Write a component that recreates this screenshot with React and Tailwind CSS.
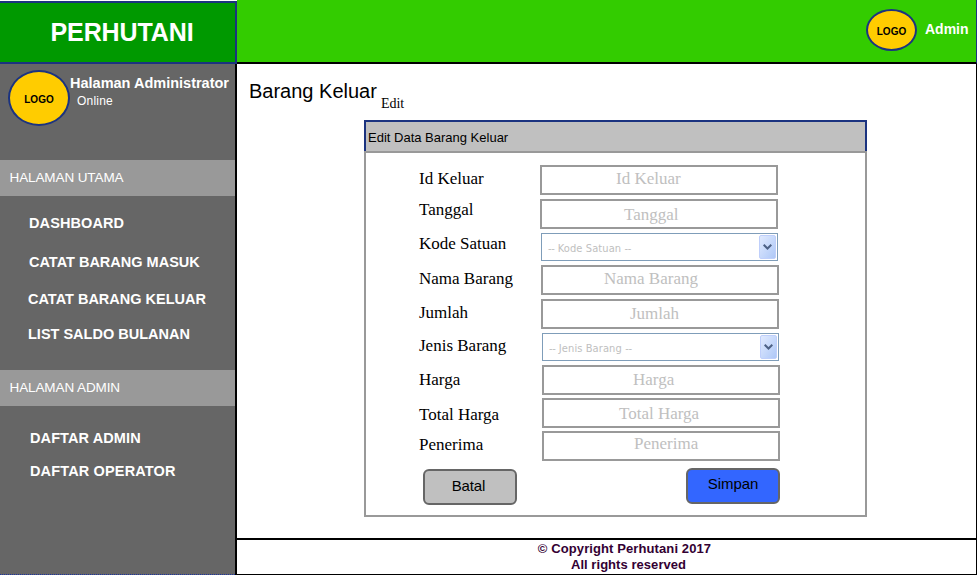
const sans = "font-['Liberation_Sans',Arial,sans-serif]";

function Logo({ className }) {
  return (
    <div
      className={`flex shrink-0 items-center justify-center rounded-[50%] border-2 border-[#1b3380] bg-[#ffcc00] text-[10px] leading-3 font-bold text-black ${className}`}
    >
      LOGO
    </div>
  );
}

function NavHeading({ children }) {
  return (
    <div className="h-9 bg-[#999999] pt-2 pl-[9.5px] text-[13.5px] leading-5 tracking-[-0.1px] text-white">{children}</div>
  );
}

function NavItem({ className, children }) {
  return <a className={`block h-5 whitespace-nowrap text-[14.5px] leading-5 font-bold text-white ${className}`}>{children}</a>;
}

function Row({ label, labelClass, rowClass, children }) {
  return (
    <div className={`flex items-start ${rowClass}`}>
      <label className={`w-[121px] shrink-0 whitespace-nowrap text-[17px] leading-5 ${labelClass}`}>{label}</label>
      {children}
    </div>
  );
}

function Field({ className, children }) {
  return (
    <div className={`h-[30px] w-[238px] shrink-0 whitespace-nowrap border-2 border-[#999999] text-[17px] leading-5 text-[#c0c0c0] ${className}`}>
      {children}
    </div>
  );
}

function Select({ className, children }) {
  return (
    <div className={`flex h-7 w-[237px] shrink-0 justify-between border border-[#7f9db9] pt-px pr-px pl-[6px] ${className}`}>
      <span className="pt-1 font-['DejaVu_Sans_Condensed','DejaVu_Sans',sans-serif] text-[11px] leading-5 tracking-[0.1px] whitespace-nowrap text-[#c0c0c0]">
        <span className="tracking-[-0.3px]">--</span> {children} <span className="tracking-[-0.3px]">--</span>
      </span>
      <span className="flex h-6 w-[17px] items-center justify-center rounded-[2px] border border-[#bfcffb] bg-linear-to-br from-[#e1eafe] to-[#aec8f7]">
        <svg width="9" height="6" viewBox="0 0 9 6" fill="none" stroke="#4d6185" strokeWidth="2">
          <path d="M0.7 0.8 L4.5 4.5 L8.3 0.8" />
        </svg>
      </span>
    </div>
  );
}

export default function App() {
  return (
    <div className={`flex h-[575px] w-[977px] overflow-hidden bg-white ${sans}`}>
      <aside className="flex w-[237px] shrink-0 flex-col">
        <div className="mt-px h-[63px] border-y-2 border-r-2 border-[#1b3380] bg-[#009900] pt-[15px] pl-[50.5px] text-[25px] leading-7 font-bold tracking-[-0.1px] text-white">
          PERHUTANI
        </div>
        <div className="flex h-[511px] flex-col border-r-2 border-black bg-[#666666]">
          <div className="flex h-24 items-start pt-[6px] pl-2">
            <Logo className="h-14 w-[62px] pt-[3px]" />
            <div className="pt-[3px] whitespace-nowrap text-white">
              <div className="text-[14.5px] leading-5 font-bold">Halaman Administrator</div>
              <div className="-mt-[2px] pl-[7px] text-xs leading-5 tracking-[0.2px]">Online</div>
            </div>
          </div>
          <NavHeading>HALAMAN UTAMA</NavHeading>
          <nav className="h-[174px] pt-[17px]">
            <NavItem className="pl-[29px] tracking-[0.1px]">DASHBOARD</NavItem>
            <NavItem className="mt-[19px] pl-[29px]">CATAT BARANG MASUK</NavItem>
            <NavItem className="mt-[17px] pl-[28px]">CATAT BARANG KELUAR</NavItem>
            <NavItem className="mt-[15px] pl-[28px]">LIST SALDO BULANAN</NavItem>
          </nav>
          <NavHeading>HALAMAN ADMIN</NavHeading>
          <nav className="grow pt-[22px]">
            <NavItem className="pl-[30px] tracking-[0.1px]">DAFTAR ADMIN</NavItem>
            <NavItem className="mt-[13px] pl-[30px] tracking-[0.15px]">DAFTAR OPERATOR</NavItem>
          </nav>
          <div className="border-b border-dotted border-[#1b33a0]" />
        </div>
      </aside>

      <div className="flex w-[740px] flex-col">
        <header className="flex h-16 items-start border-r border-b-2 border-r-[#1b3380] border-b-black bg-[#33cc00] pt-[9px] pl-[629px]">
          <Logo className="h-[42px] w-[51px] pt-[3px]" />
          <span className="pt-[10px] pl-2 text-sm leading-5 font-bold text-white">Admin</span>
        </header>

        <main className="h-[474px] border-r border-black pt-[15px]">
          <div className="flex h-[41px] items-start pl-3 text-black">
            <h1 className="text-xl leading-6">Barang Keluar</h1>
            <span className="pt-[15px] pl-1 font-['Liberation_Serif',serif] text-sm leading-5">Edit</span>
          </div>
          <section className="ml-[127px] flex h-[397px] w-[503px] flex-col">
            <h2 className="h-[31px] border-x-2 border-t-2 border-[#1b3380] bg-[#c0c0c0] pt-[6px] pl-[2px] text-[13px] leading-5">
              Edit Data Barang Keluar
            </h2>
            <div className="grow border-2 border-[#999999] pt-3 pl-[53px] font-['Liberation_Serif',serif] text-black">
              <Row label="Id Keluar" rowClass="h-[34px]" labelClass="pt-1">
                <Field className="pt-[2px] pl-[74px]">Id Keluar</Field>
              </Row>
              <Row label="Tanggal" rowClass="h-[34px]" labelClass="pt-px">
                <Field className="pt-1 pl-[82px]">Tanggal</Field>
              </Row>
              <Row label="Kode Satuan" rowClass="h-8" labelClass="pt-px">
                <Select className="ml-px">Kode Satuan</Select>
              </Row>
              <Row label="Nama Barang" rowClass="h-[34px]" labelClass="pt-1">
                <Field className="ml-px pt-[2px] pl-[61px]">Nama Barang</Field>
              </Row>
              <Row label="Jumlah" rowClass="h-[34px]" labelClass="pt-1">
                <Field className="ml-px pt-[3px] pl-[87px]">Jumlah</Field>
              </Row>
              <Row label="Jenis Barang" rowClass="h-8" labelClass="pt-[3px]">
                <Select className="ml-[2px]">Jenis Barang</Select>
              </Row>
              <Row label="Harga" rowClass="h-[33px]" labelClass="pt-[5px]">
                <Field className="ml-[2px] pt-[3px] pl-[89px]">Harga</Field>
              </Row>
              <Row label="Total Harga" rowClass="h-[33px]" labelClass="pt-[7px]">
                <Field className="ml-[2px] pt-1 pl-[75px]">Total Harga</Field>
              </Row>
              <Row label="Penerima" rowClass="h-[37px]" labelClass="pt-1">
                <Field className="ml-[2px] pt-px pl-[90px]">Penerima</Field>
              </Row>
              <div className={`flex items-start pl-1 text-[15px] leading-5 ${sans}`}>
                <button className="mt-px h-9 w-[94px] rounded-md border-2 border-[#666666] bg-[#c0c0c0] pr-[3px] pb-[3px] tracking-[-0.1px]">Batal</button>
                <button className="ml-[169px] h-9 w-[94px] rounded-md border-2 border-[#666666] bg-[#3366ff] pb-[5px] tracking-[-0.1px]">Simpan</button>
              </div>
            </div>
          </section>
        </main>

        <footer className="h-[37px] border-t-2 border-r border-b border-black pt-px text-center text-[13px] leading-4 font-bold text-[#330033]">
          <div className="pl-[36px] tracking-[0.1px]">© Copyright Perhutani 2017</div>
          <div className="pl-[44px] tracking-[0.05px]">All rights reserved</div>
        </footer>
      </div>
    </div>
  );
}
